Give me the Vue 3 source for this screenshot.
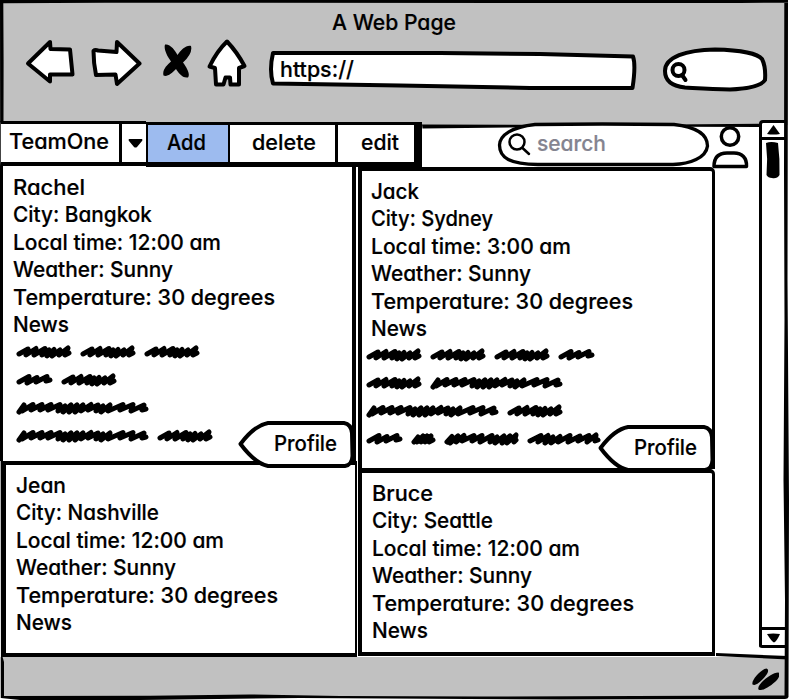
<script setup>
import { h } from 'vue'

// A single line of lettering, fitted to a fixed advance width.
const Label = (props) =>
  h('svg', { width: props.w, height: 27, class: 'lettering' }, [
    h('text', { x: 0, y: 21, textLength: props.w, lengthAdjust: 'spacingAndGlyphs' }, props.text),
  ])
Label.props = ['text', 'w']

// Scribbled words, keyed by their width in pixels.
const strokes = {
  25: 'M3 10L7 5 6 10 12 4 10 10 16 4 14 10 20 4 18 10 22 8',
  37: 'M3 9L13 3.500 11 10 21 4.500 20 9 31 3.500 30 8 34 7',
  56: 'M3 9L12 4 10 10 20 3.500 18 10 29 3.500 26 10 33 5 31 11 38 4.500 36 11 44 5 43 10 52 3 49 10 53 8',
  74: 'M3 9L14 3.500 11 10 21 3.500 18 11 26 5 24 11 33 4.500 31 10 43 3.500 41 10 53 4 51 9 62 3.500 60 10 69 3 68 9 71 8',
  75: 'M3 10L8 4.500 6 11 14 4 12 10 20 3.500 18 9 30 3.500 28 9 38 3.500 36 10 48 3.500 46 10 53 5 51 11 60 4 58 11 66 4 63 11 72 3 70 10 72 8',
  133: 'M3 11L8 4 6 10 17 3.500 15 9 26 3.500 24 9 35 3.500 32 9 44 3.500 42 10 49 5 47 11 55 4 53 11 61 4 59 11 67 4 65 10 75 3.500 72 9 82 4 80 10 87 5 85 11 94 4 92 10 107 3.500 104 9 117 3.500 115 10 128 4 126 9 130 8',
}

const columns = [
  {
    side: 'left',
    cards: [
      {
        key: 'rachel', profile: true,
        lines: [['Rachel', 72], ['City: Bangkok', 139], ['Local time: 12:00 am', 208], ['Weather: Sunny', 160], ['Temperature: 30 degrees', 262], ['News', 56]],
        news: [[56, 56, 56], [37, 56], [133], [133, 56]],
      },
      {
        key: 'jean',
        lines: [['Jean', 50], ['City: Nashville', 143], ['Local time: 12:00 am', 208], ['Weather: Sunny', 160], ['Temperature: 30 degrees', 262], ['News', 56]],
        news: [],
      },
    ],
  },
  {
    side: 'right',
    cards: [
      {
        key: 'jack', profile: true,
        lines: [['Jack', 48], ['City: Sydney', 122], ['Local time: 3:00 am', 200], ['Weather: Sunny', 160], ['Temperature: 30 degrees', 262], ['News', 56]],
        news: [[56, 56, 56, 37], [56, 133], [133, 56], [37, 25, 75, 74]],
      },
      {
        key: 'bruce',
        lines: [['Bruce', 61], ['City: Seattle', 121], ['Local time: 12:00 am', 208], ['Weather: Sunny', 160], ['Temperature: 30 degrees', 262], ['News', 56]],
        news: [],
      },
    ],
  },
]
</script>

<template>
  <div class="window">
    <header class="chrome">
      <h1 class="title"><Label text="A Web Page" :w="124" /></h1>
      <div class="nav">
        <svg class="icon" width="50" height="46" viewBox="25 39 50 46">
          <path d="M28 63.5L50 42 50.5 49 70 49.5 72.5 74.5 50 74.5 50 81.5Z" />
        </svg>
        <svg class="icon forward" width="52" height="48" viewBox="90 39 52 48">
          <path d="M93.5 51Q95 49.500 98 50.500L116.500 52 117 42 139.500 63.500 117 84 115.500 74.500 96 75Q93.500 63 93.500 51Z" />
        </svg>
        <svg class="stop" width="30" height="36" viewBox="162 42 30 36">
          <path d="M165 43.500C170 42.500 175 49 177.500 54C181 49 186 44 191 45Q193 52 183 61.500C187 67 190.500 73 188 76.500C182 77.500 178 71 176 68C172 72 167 76.500 163.500 74.500C162 69 167 64 171 60.500C167 55 163.500 48 165 43.500Z" />
        </svg>
        <svg class="icon home" width="42" height="50" viewBox="206 37 42 50">
          <path d="M227 40.500Q237 51 244.500 65L239 67 239 83.500 230.500 83.500 230 76.500 225.500 76.500 223.500 83.500 216 83.500 215 67 209.500 65.500Q217 50 227 40.500Z" />
        </svg>
        <div class="url">
          <svg class="backdrop" width="370" height="42" viewBox="267 49 370 42">
            <path d="M273 53L440 53 540 54 633 56.500Q636 65 632.500 88L530 88 400 85.500 273 83.500Q269 70 273 53Z" />
          </svg>
          <Label text="https://" :w="74" />
        </div>
        <svg class="icon find" width="108" height="46" viewBox="661 46 108 46">
          <path d="M665 71C665 57 686 50 715 49.500C741 50 758 54 762 59Q766 67 765 80Q760 88 730 89.500C710 89 695 88 685 87.500C671 86 665 80 665 71Z" />
          <circle cx="678.500" cy="70" r="6" />
          <path d="M682 75L685.500 80" />
        </svg>
      </div>
    </header>

    <div class="content">
      <div class="main">
        <div class="toolbar">
          <div class="combo">
            <span class="team"><Label text="TeamOne" :w="100" /></span>
            <svg class="arrow" width="15" height="9" viewBox="0 0 15 9"><path d="M1 0H14Q15 1 14 2L9 8Q7.500 9 6 8L1 2Q0 1 1 0Z" /></svg>
          </div>
          <div class="buttons">
            <button class="add"><Label text="Add" :w="39" /></button>
            <button class="delete"><Label text="delete" :w="64" /></button>
            <button class="edit"><Label text="edit" :w="38" /></button>
          </div>
          <div class="search">
            <svg class="backdrop pill" width="214" height="47" viewBox="497 121 214 47">
              <path d="M535 124.500Q600 123.500 674 124.500C696 127 707.500 134 707.500 146C706 158 690 164 673 164.500L538 164.500C510 164 499.500 158 499.500 145C500 135 512 127 535 124.500Z" />
              <g class="lens">
                <circle cx="517" cy="142" r="7.500" />
                <path d="M522.500 148L529 154" />
              </g>
            </svg>
            <Label text="search" :w="69" />
          </div>
          <svg class="icon user" width="40" height="46" viewBox="710 124 40 46">
            <circle cx="730" cy="136.500" r="8.700" />
            <path d="M714 166.500C714 158 718 153 727 153H734C742 153 747 158 746.500 166.500Z" />
          </svg>
        </div>

        <main class="board">
          <section v-for="col in columns" :key="col.side" :class="['column', col.side]">
            <article v-for="card in col.cards" :key="card.key" :class="['card', card.key]">
              <p v-for="[text, w] in card.lines" :key="text" class="line"><Label :text="text" :w="w" /></p>
              <div v-if="card.news.length" class="news">
                <div v-for="(row, r) in card.news" :key="r" class="scribble">
                  <svg v-for="(word, i) in row" :key="i" :width="word" height="14"><path :d="strokes[word]" /></svg>
                </div>
              </div>
              <button v-if="card.profile" class="profile">
                <svg class="backdrop" width="118" height="49" viewBox="237 419 118 49">
                  <path d="M240.500 443C248 433 257 424 268 422H344Q351 423 352 432L352.500 455Q352 464 345 465H268C258 463 248 453 240.500 443Z" />
                </svg>
                <Label text="Profile" :w="63" />
              </button>
            </article>
          </section>
        </main>
      </div>

      <aside class="scrollbar">
        <div class="step up"><svg width="13" height="10"><path d="M6.500 0L13 9Q6 10 0 9Z" /></svg></div>
        <div class="track">
          <svg width="16" height="38"><path d="M1 2Q6 0 13 2Q15 18 14.500 34Q12 38 7 37Q3 37 1.500 34Q3 18 1 2Z" /></svg>
        </div>
        <div class="step down"><svg width="13" height="10"><path d="M0 1Q6 0 13 1Q10 8 7 9.500Q5 9 0 1Z" /></svg></div>
      </aside>
    </div>

    <footer class="status">
      <svg width="28" height="24" viewBox="751 667 28 24">
        <path d="M752.500 684.500C751 680 762 668.500 766.500 668.500Q769.500 669.500 767 674C762 681 756 686.500 752.500 684.500ZM758.500 689.500C756 685 772 672 778.500 672.500Q781 675 777 680C771 686 762 692 758.500 689.500Z" />
      </svg>
    </footer>

    <svg class="frame" width="790" height="700">
      <path d="M0 0H788V2.700L740 3 105 2.800 3.300 3.200 3.600 62 3.500 120 2.800 165V410L2 470V655L4 662V696L150 695.700 250 694.500 340 696 480 696.500 700 695.700 784.500 695.500 785 600 783.500 480 784.500 320 784 170 784.300 3H788L787.500 280 789 500 788.500 697Q788 699 785 699L560 699.500 300 698 140 700H20L1 698Z" />
      <path d="M422 124.500L610 125 760 123.800V127L600 126.500 422.500 128.500Z" />
      <path d="M716 653L788 656V659.500L716 656Z" />
    </svg>
  </div>
</template>

<style>
body { margin: 0; background: #fff; }
</style>

<style scoped>
.window {
  position: relative;
  display: flex;
  flex-direction: column;
  width: 790px;
  height: 700px;
  overflow: hidden;
  background: #fff;
  color: #000;
  font-family: Inter, "Open Sans", sans-serif;
}
.lettering {
  display: block;
  flex: none;
  overflow: visible;
  font-size: 22px;
  font-weight: 500;
  font-feature-settings: "cv11" 1, "cv05" 0, "calt" 0;
  fill: currentColor;
  stroke: currentColor;
  stroke-width: 0.2;
  stroke-linejoin: round;
}
button {
  margin: 0;
  padding: 0;
  border: 0;
  background: #fff;
  color: inherit;
  font-family: inherit;
}
.backdrop {
  position: absolute;
  left: 0;
  top: 0;
  z-index: -1;
  fill: #fff;
  stroke: #000;
  stroke-width: 4;
  stroke-linejoin: round;
}
.icon {
  flex: none;
  fill: #fff;
  stroke: #000;
  stroke-width: 4;
  stroke-linejoin: round;
  stroke-linecap: round;
}
.frame {
  position: absolute;
  left: 0;
  top: 0;
  pointer-events: none;
}

.chrome {
  flex: none;
  box-sizing: border-box;
  width: 788px;
  height: 121px;
  padding-top: 9px;
  background: #c1c1c1;
}
.title {
  display: flex;
  margin: 0;
  padding-left: 332px;
}
.nav {
  display: flex;
  align-items: flex-start;
  padding: 2px 0 0 25px;
}
.nav .icon:first-child { margin-top: 1px; }
.forward { margin: 1px 0 0 15px; }
.stop { margin: 5px 0 0 20px; }
.home { margin-left: 14px; }
.url {
  position: relative;
  z-index: 0;
  flex: none;
  box-sizing: border-box;
  width: 370px;
  height: 42px;
  margin: 11px 0 0 19px;
  padding: 7px 0 0 13px;
}
.find { margin: 8px 0 0 24px; }

.content {
  display: flex;
  flex: none;
  width: 788px;
  height: 536px;
  background: linear-gradient(#c1c1c1 4px, #fff 4px);
}
.main { flex: none; width: 759px; }
.toolbar {
  position: relative;
  z-index: 2;
  display: flex;
  height: 46px;
}
.combo {
  display: flex;
  align-items: center;
  box-sizing: border-box;
  width: 146px;
  height: 45px;
  border-top: 3px solid #000;
  border-bottom: 4px solid #000;
  border-left: 1px solid #444;
  background: #fff;
}
.team {
  box-sizing: border-box;
  width: 121px;
  height: 38px;
  padding: 4px 0 0 8px;
  border-right: 3px solid #000;
}
.arrow { margin-left: 6px; }
.buttons {
  display: flex;
  box-sizing: border-box;
  width: 276px;
  height: 45px;
  margin-top: 1px;
  border: solid #000;
  border-width: 3px 8px 5px 2px;
}
.buttons button {
  display: flex;
  box-sizing: border-box;
  height: 37px;
  padding-top: 4px;
}
.buttons .add {
  width: 80px;
  padding-left: 19px;
  background: #9dbbef;
}
.buttons .delete {
  width: 110px;
  padding-left: 22px;
  border: solid #000;
  border-width: 0 3px 0 2px;
}
.buttons .edit {
  width: 76px;
  padding-left: 23px;
}
.search {
  position: relative;
  z-index: 0;
  box-sizing: border-box;
  width: 214px;
  height: 46px;
  margin-left: 75px;
  padding: 9px 0 0 40px;
  color: #848490;
}
.pill { stroke-width: 3.300; stroke-linecap: round; }
.lens { stroke-width: 2.500; }
.user { margin: 3px 0 0 -1px; stroke-width: 3.500; }

.board { display: flex; }
.column {
  display: flex;
  flex: none;
  flex-direction: column;
}
.left { width: 358px; margin-top: -2px; }
.right { width: 358px; }
.card {
  position: relative;
  box-sizing: border-box;
  background: #fff;
}
.line {
  height: 27.400px;
  margin: 0;
}
.rachel {
  z-index: 1;
  width: 356px;
  height: 296px;
  padding: 9px 0 0 10px;
  border-left: 3px solid #000;
  border-right: 4px solid #000;
}
.jean {
  width: 355px;
  height: 196px;
  margin-left: 2px;
  padding: 7px 0 0 10px;
  border: solid #000;
  border-width: 4px 2px 4px 4px;
}
.jack {
  z-index: 1;
  width: 357px;
  height: 302px;
  padding: 7px 0 0 9px;
  border: solid #000;
  border-width: 4px 3.500px 1px 4px;
  border-radius: 0 5px 0 0;
}
.bruce {
  width: 357px;
  height: 187px;
  padding: 7px 0 0 10px;
  border: solid #000;
  border-width: 4px 3px 4px 4px;
  border-radius: 0 5px 0 0;
}
.news {
  display: grid;
  grid-auto-rows: 28px;
  padding-left: 3px;
}
.jack .news { margin: -1px 0 0 -8px; }
.scribble {
  display: flex;
  align-items: center;
  gap: 8px;
}
.scribble path {
  fill: none;
  stroke: #000;
  stroke-width: 5;
  stroke-linecap: round;
  stroke-linejoin: round;
}
.profile {
  position: absolute;
  z-index: 1;
  right: -3px;
  bottom: -8px;
  display: flex;
  align-items: flex-start;
  box-sizing: border-box;
  width: 118px;
  height: 49px;
  padding: 10px 0 0 37px;
  background: none;
}
.jack .profile { right: -3px; bottom: -5px; }

.scrollbar {
  box-sizing: border-box;
  width: 26px;
  height: 528px;
  margin-top: -1px;
  border: 3px solid #000;
  border-right: 0;
  border-radius: 4px 0 0 3px;
  background: #fff;
}
.step {
  display: flex;
  box-sizing: border-box;
  justify-content: center;
}
.up {
  height: 17px;
  padding-top: 2px;
  border-bottom: 3px solid #000;
}
.track {
  height: 487px;
  padding: 1px 0 0 3px;
  box-sizing: border-box;
}
.down {
  height: 18px;
  padding-top: 3px;
  border-top: 3px solid #000;
}
.status {
  display: flex;
  flex: none;
  justify-content: flex-end;
  align-items: flex-start;
  box-sizing: border-box;
  width: 786px;
  height: 41px;
  padding: 10px 7px 0 0;
  background: #c1c1c1;
}
</style>
